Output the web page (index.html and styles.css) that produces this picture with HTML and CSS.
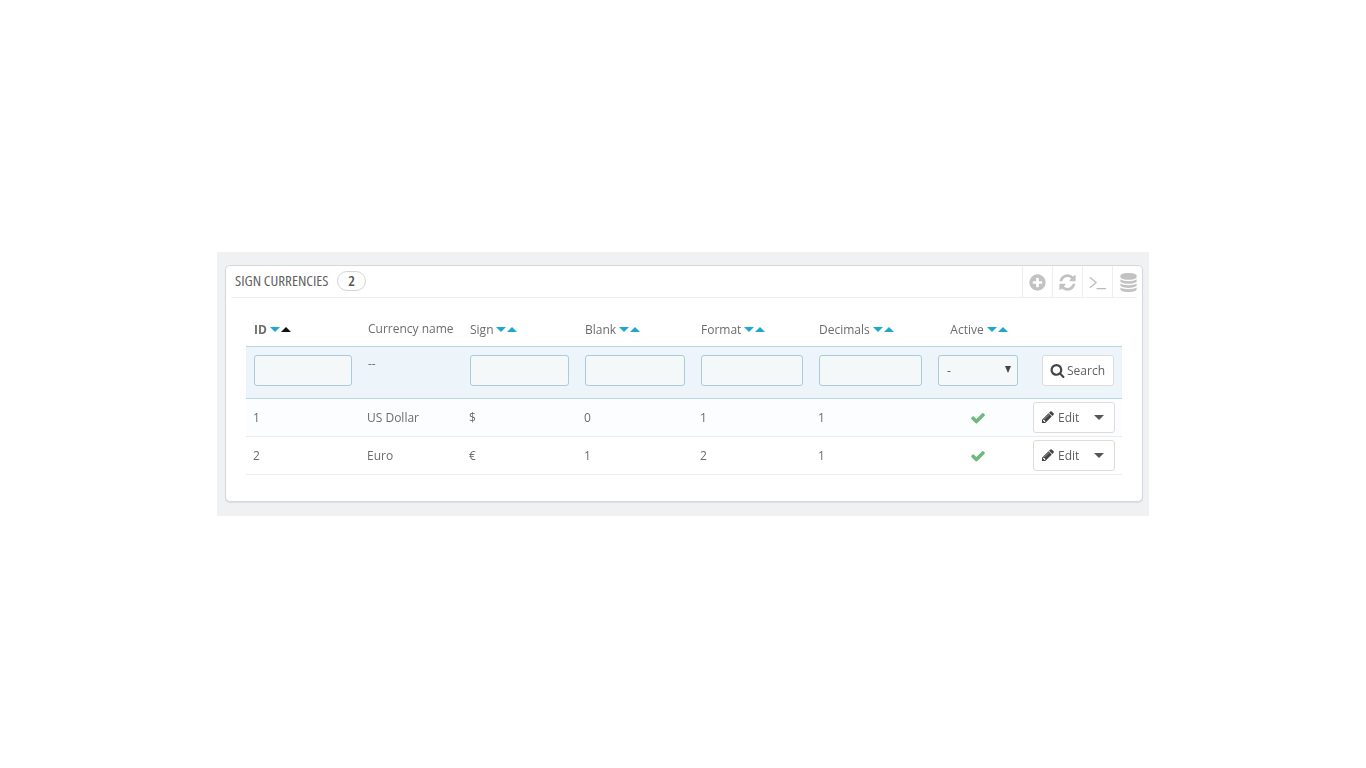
FILE: index.html
```html
<!DOCTYPE html>
<html lang="en">
<head>
<meta charset="utf-8">
<title>Sign currencies</title>
<link rel="stylesheet" href="styles.css">
</head>
<body>
<div class="backdrop">
  <section class="panel">
    <header class="heading">
      <span class="title">SIGN CURRENCIES</span>
      <span class="badge">2</span>
      <div class="toolbar">
        <a class="tool"><svg class="tool-icon" viewBox="0 0 1792 1792"><path d="M1344 960v-128q0-26-19-45t-45-19h-256v-256q0-26-19-45t-45-19h-128q-26 0-45 19t-19 45v256h-256q-26 0-45 19t-19 45v128q0 26 19 45t45 19h256v256q0 26 19 45t45 19h128q26 0 45-19t19-45v-256h256q26 0 45-19t19-45zm320-64q0 209-103 385.500t-279.500 279.500-385.500 103-385.500-103-279.500-279.500-103-385.500 103-385.500 279.500-279.500 385.500-103 385.500 103 279.500 279.500 103 385.500z"/></svg></a>
        <a class="tool"><svg class="tool-icon" viewBox="0 0 1792 1792"><path d="M1639 1056q0 5-1 7-64 268-268 434.500t-478 166.500q-146 0-282.500-55t-243.500-157l-129 129q-19 19-45 19t-45-19-19-45v-448q0-26 19-45t45-19h448q26 0 45 19t19 45-19 45l-137 137q71 66 161 102t187 36q134 0 250-65t186-179q11-17 53-117 8-23 30-23h192q13 0 22.500 9.500t9.500 22.500zm25-800v448q0 26-19 45t-45 19h-448q-26 0-45-19t-19-45 19-45l138-138q-148-137-349-137-134 0-250 65t-186 179q-11 17-53 117-8 23-30 23h-199q-13 0-22.500-9.500t-9.500-22.500v-7q65-268 270-434.500t480-166.500q146 0 284 55.500t245 156.500l130-129q19-19 45-19t45 19 19 45z"/></svg></a>
        <a class="tool"><svg class="tool-icon" viewBox="0 0 20 20"><path class="prompt" d="M2 4.500l6.500 5.500-6.500 5.500M9 16.500h10"/></svg></a>
        <a class="tool"><svg class="tool-icon" viewBox="0 0 1792 1792"><path d="M896 768q237 0 443-43t325-127v170q0 69-103 128t-280 93.500-385 34.500-385-34.500-280-93.500-103-128v-170q119 84 325 127t443 43zm0 768q237 0 443-43t325-127v170q0 69-103 128t-280 93.500-385 34.500-385-34.500-280-93.500-103-128v-170q119 84 325 127t443 43zm0-384q237 0 443-43t325-127v170q0 69-103 128t-280 93.500-385 34.500-385-34.500-280-93.500-103-128v-170q119 84 325 127t443 43zm0-1152q208 0 385 34.500t280 93.500 103 128v128q0 69-103 128t-280 93.500-385 34.500-385-34.500-280-93.500-103-128v-128q0-69 103-128t280-93.500 385-34.500z"/></svg></a>
      </div>
    </header>
    <div class="table-wrap">
      <table class="grid">
        <colgroup>
          <col class="c1"><col class="c2"><col class="c3"><col class="c4"><col class="c5"><col class="c6"><col class="c7"><col class="c8">
        </colgroup>
        <thead>
          <tr class="titles">
            <th><span class="strong">ID</span><span class="carets"><i class="down"></i><i class="up current"></i></span></th>
            <th>Currency name</th>
            <th>Sign<span class="carets"><i class="down"></i><i class="up"></i></span></th>
            <th>Blank<span class="carets"><i class="down"></i><i class="up"></i></span></th>
            <th>Format<span class="carets"><i class="down"></i><i class="up"></i></span></th>
            <th>Decimals<span class="carets"><i class="down"></i><i class="up"></i></span></th>
            <th class="center">Active<span class="carets"><i class="down"></i><i class="up"></i></span></th>
            <th></th>
          </tr>
          <tr class="filters">
            <th><input class="field" type="text"></th>
            <th class="dash">--</th>
            <th><input class="field" type="text"></th>
            <th><input class="field" type="text"></th>
            <th><input class="field" type="text"></th>
            <th><input class="field" type="text"></th>
            <th><div class="field select"><span>-</span><i class="select-arrow"></i></div></th>
            <th class="search-cell">
              <button class="btn search" type="button"><svg class="btn-icon" viewBox="0 0 1792 1792"><path d="M1216 832q0-185-131.500-316.500t-316.500-131.500-316.500 131.500-131.500 316.500 131.500 316.500 316.500 131.500 316.500-131.500 131.500-316.500zm512 832q0 52-38 90t-90 38q-54 0-90-38l-343-342q-179 124-399 124-143 0-273.500-55.500t-225-150-150-225-55.500-273.500 55.500-273.500 150-225 225-150 273.500-55.500 273.500 55.500 225 150 150 225 55.500 273.500q0 220-124 399l343 343q37 37 37 90z"/></svg>Search</button>
            </th>
          </tr>
        </thead>
        <tbody>
          <tr class="odd">
            <td>1</td><td>US Dollar</td><td>$</td><td>0</td><td>1</td><td>1</td>
            <td class="center"><svg class="check" viewBox="0 0 1792 1792"><path d="M1671 566q0 40-28 68l-724 724-136 136q-28 28-68 28t-68-28l-136-136-362-362q-28-28-28-68t28-68l136-136q28-28 68-28t68 28l294 295 656-657q28-28 68-28t68 28l136 136q28 28 28 68z"/></svg></td>
            <td class="action"><button class="btn edit" type="button"><svg class="pencil" viewBox="0 0 1792 1792"><path d="M491 1536l91-91-235-235-91 91v107h128v128h107zm523-928q0-22-22-22-10 0-17 7l-542 542q-7 7-7 17 0 22 22 22 10 0 17-7l542-542q7-7 7-17zm-54-192l416 416-832 832h-416v-416zm683 96q0 53-37 90l-166 166-416-416 166-165q36-38 90-38 53 0 91 38l235 234q37 39 37 91z"/></svg>Edit<i class="menu-caret"></i></button></td>
          </tr>
          <tr>
            <td>2</td><td>Euro</td><td>€</td><td>1</td><td>2</td><td>1</td>
            <td class="center"><svg class="check" viewBox="0 0 1792 1792"><path d="M1671 566q0 40-28 68l-724 724-136 136q-28 28-68 28t-68-28l-136-136-362-362q-28-28-28-68t28-68l136-136q28-28 68-28t68 28l294 295 656-657q28-28 68-28t68 28l136 136q28 28 28 68z"/></svg></td>
            <td class="action"><button class="btn edit" type="button"><svg class="pencil" viewBox="0 0 1792 1792"><path d="M491 1536l91-91-235-235-91 91v107h128v128h107zm523-928q0-22-22-22-10 0-17 7l-542 542q-7 7-7 17 0 22 22 22 10 0 17-7l542-542q7-7 7-17zm-54-192l416 416-832 832h-416v-416zm683 96q0 53-37 90l-166 166-416-416 166-165q36-38 90-38 53 0 91 38l235 234q37 39 37 91z"/></svg>Edit<i class="menu-caret"></i></button></td>
          </tr>
        </tbody>
      </table>
    </div>
  </section>
</div>
</body>
</html>
```
FILE: styles.css
```css
* { box-sizing: border-box; }
html, body { margin: 0; background: #fff; }
body {
  min-height: 768px;
  padding: 252px 217px 0;
  font-family: "Open Sans", "Liberation Sans", sans-serif;
  font-size: 12px;
  color: #6c6c6c;
}
.backdrop {
  width: 932px;
  height: 264px;
  padding: 13px 6px 14px 8px;
  background: #eff1f2;
}
.panel {
  height: 237px;
  background: #fff;
  border: 1px solid #d3d8db;
  border-radius: 5px;
  box-shadow: 0 1px 1px rgba(0, 0, 0, .08);
}
.heading {
  display: flex;
  align-items: center;
  height: 32px;
  margin: 0 5px;
  padding-left: 4px;
  border-bottom: 1px solid #eee;
}
.title {
  flex: none;
  width: 93px;
  margin-bottom: 4px;
  white-space: nowrap;
  font-family: "Open Sans", "Roboto", sans-serif;
  font-stretch: 75%;
  font-size: 15px;
  color: #5f5f5f;
}
.badge {
  width: 29px;
  height: 20px;
  margin-left: 9px;
  margin-bottom: 2px;
  border: 1px solid #d5d5d5;
  border-radius: 10px;
  background: #fdfdfd;
  font-family: "Open Sans", "Roboto", sans-serif;
  font-stretch: 75%;
  font-size: 15px;
  font-weight: 600;
  line-height: 17px;
  text-align: center;
  color: #555;
}
.toolbar { display: flex; align-self: stretch; margin-left: auto; }
.tool {
  display: flex;
  align-items: center;
  justify-content: center;
  width: 30px;
  padding-top: 2px;
  border-left: 1px solid #eee;
}
.tool:last-child { width: 25px; padding-left: 6px; justify-content: flex-start; }
.tool-icon { flex: none; width: 19px; height: 19px; fill: #c2c2c2; }
.prompt { fill: none; stroke: #bbb; stroke-width: 1.300; }
.table-wrap { padding: 12px 20px 0; will-change: transform; }
.grid {
  width: 876px;
  table-layout: fixed;
  border-collapse: collapse;
}
.c1 { width: 114px; }
.c2 { width: 102px; }
.c3 { width: 115px; }
.c4 { width: 116px; }
.c5 { width: 118px; }
.c6 { width: 119px; }
.c7 { width: 96px; }
.c8 { width: 96px; }
.titles th {
  height: 36px;
  padding: 2px 8px 0;
  font-weight: 400;
  text-align: left;
  white-space: nowrap;
  color: #6c6c6c;
}
.titles th.center { padding-left: 10px; text-align: center; }
.strong { font-weight: 700; }
.carets { display: inline-block; margin-left: 3px; vertical-align: 2px; }
.carets i {
  display: inline-block;
  width: 0;
  height: 0;
  border-left: 5px solid transparent;
  border-right: 5px solid transparent;
}
.carets .down { border-top: 5px solid #1fa8cc; }
.carets .up { margin-left: 1px; border-bottom: 5px solid #1fa8cc; }
.carets .up.current { border-bottom-color: #111; }
.filters th {
  height: 52px;
  padding: 0 8px 3px;
  background: #edf5fa;
  border-top: 1px solid #b5d7e6;
  border-bottom: 1px solid #b5d7e6;
  font-weight: 400;
  text-align: left;
}
.filters .dash { padding-bottom: 17px; color: #6c6c6c; }
.field {
  display: block;
  width: 100%;
  height: 31px;
  margin: 0;
  background: #f5f8f9;
  border: 1px solid #a9cbdc;
  border-radius: 3px;
}
.select {
  display: flex;
  align-items: center;
  justify-content: space-between;
  padding: 0 6px 0 8px;
  font-size: 12px;
  color: #555;
}
.select-arrow {
  width: 0;
  height: 0;
  margin-bottom: 3px;
  border-left: 3px solid transparent;
  border-right: 3px solid transparent;
  border-top: 7px solid #444;
}
.filters .search-cell { padding: 0 8px 3px 16px; }
.btn {
  display: flex;
  align-items: center;
  height: 31px;
  margin: 0;
  padding: 0;
  background: #fff;
  border: 1px solid #dcdcdc;
  border-radius: 3px;
  font-family: "Open Sans", "Liberation Sans", sans-serif;
  font-size: 12px;
  color: #5f5f5f;
}
.search { width: 72px; padding-left: 7px; }
.btn-icon { flex: none; width: 15px; height: 15px; margin-right: 2px; fill: #444; }
tbody td {
  height: 38px;
  padding: 0 7px;
  border-bottom: 1px solid #eaedef;
}
tbody .odd td { background: #fbfdfe; }
tbody td.center { text-align: center; }
.check { display: inline-block; width: 16px; height: 16px; margin-top: 1px; vertical-align: middle; fill: #6fb97c; }
tbody td.action { padding: 0 7px 0 7px; }
.edit { width: 82px; padding-left: 7px; }
.pencil { flex: none; width: 14px; height: 14px; margin-right: 3px; fill: #444; }
.menu-caret {
  width: 0;
  height: 0;
  margin-left: 15px;
  border-left: 5px solid transparent;
  border-right: 5px solid transparent;
  border-top: 5px solid #555;
}
```
